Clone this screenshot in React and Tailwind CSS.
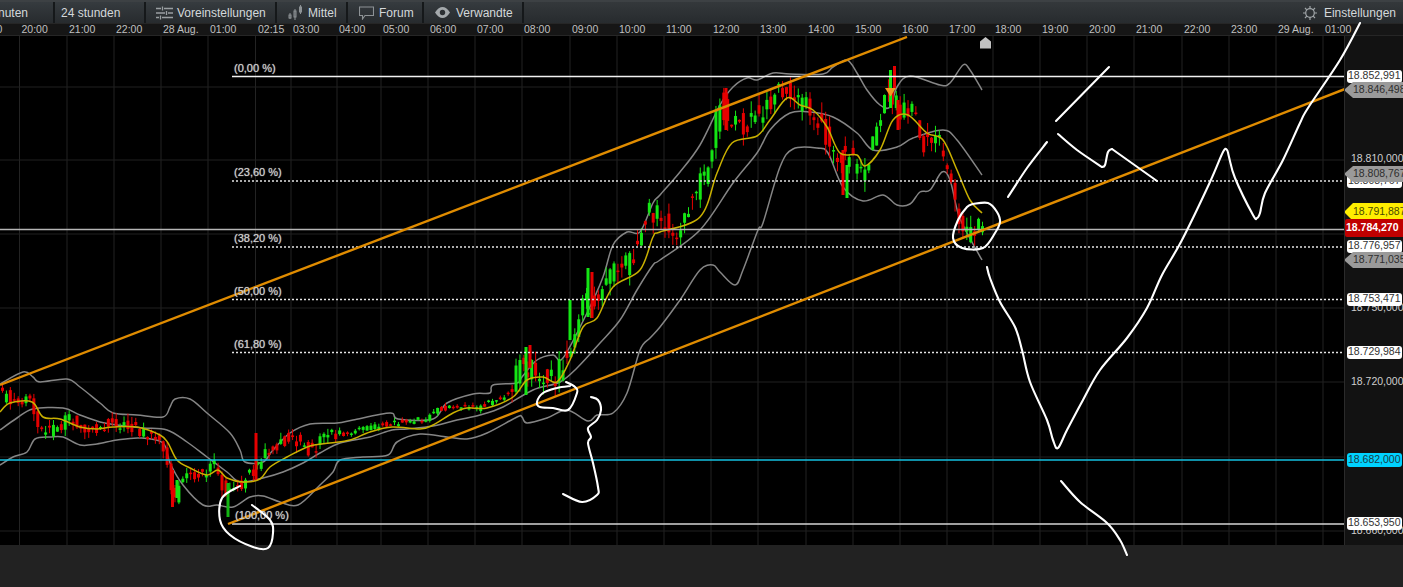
import React from "react";

const gridX = [19.5, 67, 114, 161, 208, 255.5, 291, 337, 381, 428, 475, 522, 570, 617, 664, 711, 758, 806, 853, 900, 947, 993, 1040, 1087, 1134, 1182, 1229, 1276, 1323];
const gridY = [87, 160, 234, 308, 382, 457, 531];

const times = [
    [-24, "19:00"], [21.5, "20:00"], [69, "21:00"], [116, "22:00"], [163, "28 Aug."], [210, "01:00"], [258, "02:15"], [293, "03:00"],
    [339, "04:00"], [383, "05:00"], [430, "06:00"], [477, "07:00"], [524, "08:00"], [572, "09:00"], [619, "10:00"], [666, "11:00"],
    [713, "12:00"], [760, "13:00"], [808, "14:00"], [855, "15:00"], [902, "16:00"], [949, "17:00"], [995, "18:00"], [1042, "19:00"],
    [1089, "20:00"], [1136, "21:00"], [1184, "22:00"], [1231, "23:00"], [1278, "29 Aug."], [1325, "01:00"],
];

const upperBand = [[0, 384], [23, 372], [33, 377], [40, 382], [67, 379], [80, 387], [100, 403], [113, 413], [137, 415], [163, 417], [170, 407], [175, 399], [190, 399], [207, 413], [230, 433], [240, 450], [245, 462], [263, 462], [273, 450], [290, 433], [310, 424], [337, 423], [353, 420], [390, 413], [398, 419], [433, 419], [447, 403], [473, 394], [490, 393], [493, 385], [517, 383], [522, 377], [537, 360], [553, 355], [563, 358], [587, 313], [603, 277], [613, 245], [627, 232], [640, 232], [653, 203], [660, 195], [680, 172], [700, 145], [720, 105], [733, 87], [747, 78], [757, 80], [773, 73], [790, 74], [823, 74], [833, 67], [847, 60], [857, 73], [867, 90], [880, 105], [890, 107], [897, 87], [910, 76], [940, 85], [950, 83], [963, 65], [970, 70], [982, 90]];
const lowerBand = [[0, 465], [13, 457], [27, 452], [35, 439], [50, 437], [63, 437], [80, 445], [97, 444], [117, 440], [140, 438], [163, 443], [170, 463], [183, 485], [203, 505], [217, 505], [233, 507], [250, 497], [263, 496], [280, 502], [298, 505], [320, 485], [333, 472], [340, 460], [363, 457], [388, 455], [397, 442], [420, 434], [447, 437], [467, 439], [487, 433], [517, 417], [522, 417], [527, 423], [547, 418], [567, 410], [588, 421], [597, 415], [613, 413], [627, 393], [640, 350], [650, 338], [660, 327], [680, 300], [700, 270], [713, 265], [720, 272], [735, 285], [743, 270], [758, 230], [763, 223], [780, 167], [793, 149], [817, 148], [828, 153], [843, 187], [863, 201], [883, 195], [897, 205], [910, 204], [920, 192], [930, 190], [942, 172], [950, 180], [958, 213], [967, 233], [982, 260]];
const midBand = [[0, 430], [17, 418], [33, 409], [63, 408], [80, 415], [100, 422], [117, 425], [143, 428], [167, 430], [187, 442], [207, 457], [227, 472], [240, 482], [263, 478], [283, 472], [303, 463], [320, 453], [340, 443], [370, 437], [392, 430], [407, 429], [433, 426], [457, 420], [480, 415], [503, 407], [533, 390], [560, 382], [577, 368], [600, 343], [620, 320], [637, 290], [653, 265], [660, 260], [700, 230], [733, 183], [757, 153], [770, 130], [790, 113], [810, 112], [833, 117], [857, 133], [873, 150], [897, 147], [913, 138], [943, 130], [957, 140], [982, 175]];
const average = [[0, 412], [10, 403], [32, 402], [43, 417], [60, 419], [80, 427], [97, 429], [113, 427], [137, 427], [160, 435], [168, 443], [177, 460], [190, 468], [207, 475], [218, 470], [227, 478], [243, 482], [260, 479], [270, 467], [287, 457], [310, 446], [330, 443], [350, 440], [370, 432], [392, 427], [420, 429], [433, 425], [453, 413], [467, 408], [487, 408], [513, 397], [527, 380], [543, 377], [557, 382], [570, 360], [583, 327], [597, 318], [613, 287], [640, 270], [653, 237], [660, 232], [700, 217], [717, 173], [732, 143], [757, 136], [770, 120], [787, 98], [800, 105], [813, 110], [827, 127], [840, 153], [857, 155], [865, 166], [880, 150], [893, 120], [908, 115], [927, 133], [943, 140], [957, 170], [970, 200], [982, 213]];
const pricePath = [[0, 395], [10, 397], [20, 402], [32, 400], [38, 415], [45, 432], [60, 425], [75, 418], [85, 425], [100, 432], [115, 420], [130, 425], [150, 432], [163, 435], [165, 445], [172, 480], [178, 500], [183, 478], [195, 478], [210, 470], [216, 460], [222, 480], [230, 495], [245, 483], [262, 465], [270, 450], [285, 440], [300, 440], [310, 450], [320, 445], [335, 435], [350, 432], [385, 425], [405, 422], [425, 420], [440, 410], [460, 405], [480, 408], [495, 402], [510, 392], [522, 370], [535, 372], [548, 378], [560, 375], [570, 350], [585, 300], [595, 310], [610, 270], [625, 270], [640, 245], [650, 205], [665, 225], [680, 230], [695, 195], [710, 165], [722, 105], [735, 120], [750, 125], [762, 110], [775, 95], [785, 85], [795, 100], [810, 105], [820, 115], [835, 150], [850, 155], [865, 180], [875, 140], [890, 90], [900, 110], [910, 105], [925, 140], [940, 140], [950, 175], [958, 215], [970, 232], [982, 225]];

// spikes that the generated candles don't reach
const spikes = [
    [172.5, 470, 507, "#e60000"], [177, 480, 498, "#14e614"], [228, 483, 517, "#12b512"], [256, 433, 480, "#e60000"], [526, 347, 395, "#14e614"],
    [530, 345, 368, "#e60000"], [570, 300, 340, "#14e614"], [588, 268, 317, "#14e614"], [592, 272, 318, "#e60000"], [726, 88, 130, "#e60000"],
    [890.5, 70, 108, "#14e614"], [894.5, 66, 88, "#e60000"], [898, 100, 130, "#e60000"], [847, 165, 198, "#14e614"], [843, 150, 195, "#e60000"],
];

const hand = {
    bigLoop: [[240, 486], [222, 498], [220, 520], [230, 535], [253, 547], [268, 548], [273, 533], [270, 520], [252, 505]],
    smallLoop: [[566, 382], [575, 387], [577, 393], [568, 410], [553, 408], [540, 407], [537, 402], [543, 393], [557, 388], [570, 386]],
    bracket: [[591, 397], [598, 400], [601, 410], [597, 420], [588, 428], [591, 437], [588, 443], [593, 463], [598, 487], [597, 495], [582, 502], [563, 494]],
    ring: [[973, 204], [967, 207], [958, 220], [953, 238], [962, 248], [983, 248], [995, 233], [1000, 222], [997, 212], [988, 203], [973, 204]],
    wave: [[1360, 23], [1340, 60], [1308, 108], [1300, 123], [1283, 160], [1265, 193], [1260, 213], [1257, 218], [1253, 215], [1235, 178], [1229, 157], [1227, 150], [1223, 152], [1210, 182], [1182, 240], [1162, 275], [1147, 308], [1127, 338], [1100, 370], [1083, 400], [1067, 430], [1058, 448], [1053, 440], [1047, 420], [1030, 382], [1022, 350], [1015, 327], [1000, 302], [990, 278], [987, 267]],
    dashA: [[1008, 197], [1027, 168], [1047, 142]],
    dashB: [[1056, 121], [1109, 67]],
    zigA: [[1058, 134], [1077, 150], [1102, 167]],
    zigB: [[1102, 167], [1105, 165], [1108, 152], [1112, 149]],
    zigC: [[1112, 149], [1157, 181]],
    tail: [[1061, 481], [1080, 502], [1107, 523], [1120, 540], [1127, 555]],
};

const priceLabels = [
    { y: 159, text: "18.810,000", kind: "plain" },
    { y: 308, text: "18.750,000", kind: "plain" },
    { y: 382, text: "18.720,000", kind: "plain" },
    { y: 531, text: "18.660,000", kind: "plain" },
    { y: 76, text: "18.852,991", kind: "pill" },
    { y: 181, text: "18.808,767", kind: "pill" },
    { y: 246, text: "18.776,957", kind: "pill" },
    { y: 299, text: "18.753,471", kind: "pill" },
    { y: 352, text: "18.729,984", kind: "pill" },
    { y: 523, text: "18.653,950", kind: "pill" },
    { y: 460, text: "18.682,000", kind: "cyan" },
    { y: 90, text: "18.846,498", kind: "gray" },
    { y: 174, text: "18.808,767", kind: "gray" },
    { y: 260, text: "18.771,035", kind: "gray" },
    { y: 212, text: "18.791,887", kind: "yellow" },
    { y: 228, text: "18.784,270", kind: "red" },
];

const labelStyles = {
    plain: "left-[6px] h-[13px] text-[#cfcfcf]",
    pill: "left-[2px] h-[13px] w-[55px] rounded-[3px] bg-white pl-px text-[#333]",
    cyan: "left-[2px] h-[14px] w-[55px] rounded-[3px] bg-[#00d2ff] pl-px text-[#1c3a44]",
    gray: "-left-px h-[16px] w-[60px] bg-[#9a9a9a] pl-[9px] text-[#2e2e2e] [clip-path:polygon(0_50%,9px_0,100%_0,100%_100%,9px_100%)]",
    yellow: "-left-px h-[18px] w-[60px] bg-[#ffee00] pl-[9px] text-[#4a4a00] [clip-path:polygon(0_50%,9px_0,100%_0,100%_100%,9px_100%)]",
    red: "left-0 h-[18px] w-[59px] rounded-l-[2px] bg-[#c00000] pl-px font-bold text-white",
};

const fibLabels = [
    [68, 234, "(0,00 %)"], [172, 234, "(23,60 %)"], [238, 234, "(38,20 %)"], [291, 234, "(50,00 %)"], [344, 234, "(61,80 %)"], [515, 235, "(100,00 %)"],
];

const interp = (pts, x) => {
    for (let i = 1; i < pts.length; i++) {
        if (x <= pts[i][0]) {
            const [x0, y0] = pts[i - 1];
            const [x1, y1] = pts[i];
            return y0 + ((y1 - y0) * (x - x0)) / (x1 - x0);
        }
    }
    return pts[pts.length - 1][1];
};

const rand = (i) => {
    const s = Math.sin(i * 12.9898) * 43758.5453;
    return s - Math.floor(s);
};

const smooth = (pts) => {
    let d = `M${pts[0][0]} ${pts[0][1]}`;
    for (let i = 0; i < pts.length - 1; i++) {
        const p0 = pts[i - 1] || pts[i];
        const p1 = pts[i];
        const p2 = pts[i + 1];
        const p3 = pts[i + 2] || p2;
        const c1x = p1[0] + (p2[0] - p0[0]) / 6;
        const c1y = p1[1] + (p2[1] - p0[1]) / 6;
        const c2x = p2[0] - (p3[0] - p1[0]) / 6;
        const c2y = p2[1] - (p3[1] - p1[1]) / 6;
        d += `C${c1x.toFixed(1)} ${c1y.toFixed(1)} ${c2x.toFixed(1)} ${c2y.toFixed(1)} ${p2[0]} ${p2[1]}`;
    }
    return d;
};

const candles = [];
for (let i = 0; i * 3.92 < 982; i++) {
    const x = i * 3.92 + 1;
    const size = x > 340 && x < 510 ? 0.45 : x >= 510 ? 1.7 : 1;
    const a = interp(pricePath, x) + (rand(i) - 0.5) * 15 * size;
    const b = interp(pricePath, x + 3.92) + (rand(i + 300) - 0.5) * 15 * size;
    const top = Math.min(a, b);
    const h = Math.max(Math.abs(a - b), 1.5);
    const up = b < a;
    const high = top - rand(i + 600) * 7 * size;
    const low = top + h + rand(i + 900) * 7 * size;
    candles.push({ x, top, h, high, low, color: up ? "#14e614" : "#e60000" });
}

const Band = ({ pts }) => <path d={smooth(pts)} fill="none" stroke="#858585" strokeWidth="1.5" />;

function Chart() {
    return (
        <svg viewBox="0 36 1344 509" className="block h-[509px] w-[1344px]">
            {gridX.map((x) => (
                <line key={x} x1={x} x2={x} y1="36" y2="545" stroke="#232323" strokeWidth="1" />
            ))}
            {gridY.map((y) => (
                <line key={y} x1="0" x2="1344" y1={y} y2={y} stroke="#202020" strokeWidth="1" />
            ))}
            <Band pts={upperBand} />
            <Band pts={lowerBand} />
            <Band pts={midBand} />
            {candles.map((c, i) => (
                <g key={i} fill={c.color}>
                    <rect x={c.x + 1} y={c.high} width="1" height={c.low - c.high} />
                    <rect x={c.x} y={c.top} width="3" height={c.h} />
                </g>
            ))}
            {spikes.map(([x, y1, y2, color]) => (
                <rect key={x} x={x - 1.5} y={y1} width="3" height={y2 - y1} fill={color} />
            ))}
            <path d={smooth(average)} fill="none" stroke="#c9b000" strokeWidth="1.5" />

            <line x1="232" x2="1344" y1="76.5" y2="76.5" stroke="#f2f2f2" strokeWidth="1.3" />
            <line x1="0" x2="1344" y1="229.5" y2="229.5" stroke="#b5b5b5" strokeWidth="1.4" />
            {[181, 247, 299.5, 352.5].map((y) => (
                <line key={y} x1="232" x2="1344" y1={y} y2={y} stroke="#e4e4e4" strokeWidth="1.3" strokeDasharray="2 2" />
            ))}
            <line x1="0" x2="1344" y1="460" y2="460" stroke="#14c0e0" strokeWidth="1.4" />
            <line x1="232" x2="1344" y1="524" y2="524" stroke="#d5d5d5" strokeWidth="1.3" />

            <line x1="0" y1="385" x2="907" y2="37" stroke="#e08c00" strokeWidth="2.4" />
            <line x1="228" y1="524" x2="1345" y2="89" stroke="#e08c00" strokeWidth="2.4" />

            <path d="M885 88h11l-5.5 8.500z" fill="#f29a1f" />
            <path d="M980 48.500v-7l5.500-4.500 5.500 4.500v7z" fill="#c2c2c2" />
        </svg>
    );
}

const ToolButton = ({ className, children }) => (
    <div className={`flex h-full items-center border-r-2 border-[#15181a] bg-gradient-to-b from-[#363b3f] to-[#272b2e] ${className}`}>{children}</div>
);

function Toolbar() {
    return (
        <div className="flex h-[23px] shrink-0 border-t-2 border-[#3d4144] bg-[#2d3134] text-[12px] text-[#d4d8da]">
            <ToolButton className="w-[55px] justify-end overflow-hidden pr-[25px]">
                <span>nuten</span>
            </ToolButton>
            <ToolButton className="w-[91px] pl-[6px]">24 stunden</ToolButton>
            <ToolButton className="w-[131px] pl-[10px]">
                <svg width="17" height="14" viewBox="0 0 17 14" fill="none" stroke="#9a9fa2" strokeWidth="1.3" className="mr-[4px]">
                    <path d="M0 2.500h5M8 2.500h9M6.500 .5v4M0 7h9M12 7h5M10.500 5v4M0 11.500h3M6 11.500h11M4.500 9.500v4" />
                </svg>
                Voreinstellungen
            </ToolButton>
            <ToolButton className="w-[71px] pl-[11px]">
                <svg width="15" height="15" viewBox="0 0 15 15" fill="none" stroke="#8d9295" strokeWidth="1" className="mr-[5px]">
                    <path d="M2 8v6M7 4v11M12.500 0v9" />
                    <rect x="1" y="10" width="2" height="3" />
                    <rect x="6" y="6" width="2" height="6" />
                    <rect x="11.500" y="2" width="2" height="5" />
                </svg>
                Mittel
            </ToolButton>
            <ToolButton className="w-[76px] pl-[11px]">
                <svg width="15" height="14" viewBox="0 0 15 14" fill="none" stroke="#8d9295" strokeWidth="1.1" className="mr-[5px]">
                    <path d="M.5 1h14v8.500H6L3.500 13V9.500H.5z" />
                </svg>
                Forum
            </ToolButton>
            <ToolButton className="w-[100px] pl-[11px]">
                <svg width="15" height="11" viewBox="0 0 15 11" className="mr-[6px]">
                    <path d="M0 5.500C2.500 1.500 5 0 7.500 0S12.500 1.500 15 5.500C12.500 9.500 10 11 7.500 11S2.500 9.500 0 5.500z" fill="#a4a9ac" />
                    <circle cx="7.500" cy="5.500" r="2.700" fill="#2c3033" />
                </svg>
                Verwandte
            </ToolButton>
            <div className="flex h-full flex-1 items-center justify-end bg-gradient-to-b from-[#34383b] to-[#272b2e] pr-[7px]">
                <svg width="14" height="14" viewBox="0 0 14 14" fill="none" stroke="#a2a7aa" strokeWidth="1.2" className="mr-[7px]">
                    <circle cx="7" cy="7" r="4.300" />
                    <path d="M7 0v2.500M7 11.500V14M0 7h2.500M11.500 7H14M2 2l1.800 1.800M10.200 10.200L12 12M12 2l-1.800 1.800M3.800 10.200L2 12" />
                </svg>
                Einstellungen
            </div>
        </div>
    );
}

function TimeAxis() {
    return (
        <div className="relative h-[13px] shrink-0 overflow-hidden border-y border-[#262626] bg-[#161616] text-[10.5px] leading-[11px] text-[#c0c0c0]">
            {times.map(([x, text]) => (
                <span key={x} className="absolute top-0 whitespace-nowrap" style={{ left: x }}>
                    {text}
                </span>
            ))}
        </div>
    );
}

function PriceAxis() {
    return (
        <div className="relative h-[509px] w-[59px] overflow-hidden border-l border-[#2b2b2b] bg-[#121212] text-[10.5px]">
            {priceLabels.map((l) => {
                const height = { plain: 13, pill: 13, cyan: 14, gray: 16, yellow: 18, red: 18 }[l.kind];
                return (
                    <div
                        key={l.kind + l.y}
                        className={`absolute flex items-center whitespace-nowrap ${labelStyles[l.kind]}`}
                        style={{ top: l.y - 36 - height / 2 }}
                    >
                        {l.text}
                    </div>
                );
            })}
        </div>
    );
}

export default function App() {
    return (
        <div className="relative flex h-[587px] w-[1403px] flex-col overflow-hidden bg-[#222222] font-['Liberation_Sans',Arial,sans-serif]">
            <Toolbar />
            <TimeAxis />
            <div className="flex h-[509px] shrink-0">
                <div className="relative h-[509px] w-[1344px] shrink-0 bg-black">
                    <Chart />
                    {fibLabels.map(([y, x, text]) => (
                        <span
                            key={text}
                            className="absolute text-[11px] leading-[13px] whitespace-nowrap text-[#cfcfcf] [text-shadow:0_0_1px_#aaa]"
                            style={{ top: y - 36 - 6.5, left: x }}
                        >
                            {text}
                        </span>
                    ))}
                </div>
                <PriceAxis />
            </div>
            {/* hand drawn marks on top of everything */}
            <svg viewBox="0 0 1403 587" className="pointer-events-none absolute inset-0 h-[587px] w-[1403px]">
                {Object.entries(hand).map(([name, pts]) => (
                    <path key={name} d={smooth(pts)} fill="none" stroke="#fff" strokeWidth="2.1" strokeLinecap="round" strokeLinejoin="round" />
                ))}
            </svg>
        </div>
    );
}
